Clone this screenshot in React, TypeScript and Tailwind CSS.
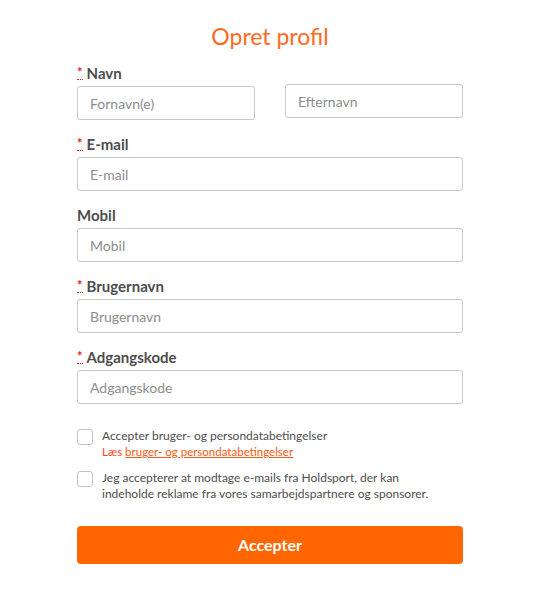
import React from "react";

function Req() {
  return (
    <abbr
      title="required"
      className="text-[#e8201c] no-underline border-b border-dotted border-[#e8201c] leading-none mr-[4px] text-[13px] align-[2px]"
    >
      *
    </abbr>
  );
}

function Label({ text, req }: { text: string; req?: boolean }) {
  return (
    <div className="h-[20px] leading-[20px] text-[15px] font-bold text-[#4d4d4d] flex items-center">
      {req && <Req />}
      <span>{text}</span>
    </div>
  );
}

function Input({ ph, cls = "" }: { ph: string; cls?: string }) {
  return (
    <input
      placeholder={ph}
      className={
        "h-[34px] w-full border border-[#c8c8c8] rounded-[3px] px-[12px] text-[14px] text-[#555] placeholder:text-[#8d8d8d] outline-none bg-white " +
        cls
      }
    />
  );
}

function Field({ label, ph, req }: { label: string; ph: string; req?: boolean }) {
  return (
    <div className="flex flex-col mb-[14px]">
      <Label text={label} req={req} />
      <div className="mt-[3px]">
        <Input ph={ph} />
      </div>
    </div>
  );
}

function Box() {
  return <span className="mt-[1px] w-[16px] h-[16px] shrink-0 border border-[#c4c4c4] rounded-[3px] bg-white" />;
}

export default function App() {
  return (
    <div
      className="w-[540px] h-[591px] bg-white pt-[22px]"
      style={{ fontFamily: "Lato, 'Open Sans', sans-serif" }}
    >
      <div className="w-[386px] mx-auto flex flex-col">
        <h1 className="text-center text-[23px] leading-[28px] text-[#ff6a1f] mb-[13px]">Opret profil</h1>

        <div className="flex flex-col mb-[14px]">
          <Label text="Navn" req />
          <div className="mt-[1px] flex gap-[30px] items-start">
            <div className="flex-1 mt-[2px]">
              <Input ph="Fornavn(e)" />
            </div>
            <div className="flex-1">
              <Input ph="Efternavn" />
            </div>
          </div>
        </div>

        <Field label="E-mail" ph="E-mail" req />
        <Field label="Mobil" ph="Mobil" />
        <Field label="Brugernavn" ph="Brugernavn" req />
        <Field label="Adgangskode" ph="Adgangskode" req />

        <div className="mt-[10px] flex gap-[9px] items-start">
          <Box />
          <div className="flex flex-col">
            <span className="text-[12px] leading-[16px] text-[#4d4d4d]">Accepter bruger- og persondatabetingelser</span>
            <span className="text-[11.5px] leading-[15px] text-[#ff3f1f]">
              Læs{" "}
              <a className="underline text-[#ff5a14]" href="#">
                bruger- og persondatabetingelser
              </a>
            </span>
          </div>
        </div>

        <div className="mt-[11px] flex gap-[9px] items-start">
          <Box />
          <span className="text-[12px] leading-[16px] text-[#4d4d4d]">
            Jeg accepterer at modtage e-mails fra Holdsport, der kan
            <br />
            indeholde reklame fra vores samarbejdspartnere og sponsorer.
          </span>
        </div>

        <button className="mt-[24px] h-[38px] w-full rounded-[4px] bg-[#ff6600] text-white text-[16px] font-bold">
          Accepter
        </button>
      </div>
    </div>
  );
}
